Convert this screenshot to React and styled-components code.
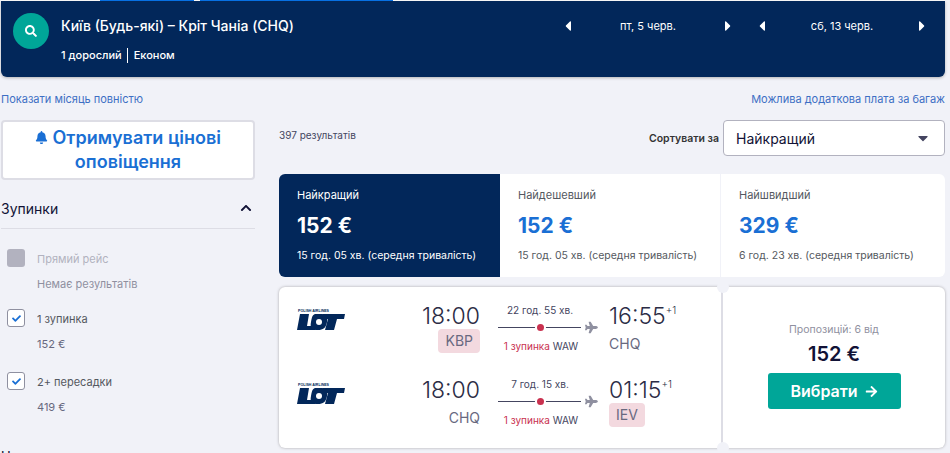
import React from "react";
import styled, { createGlobalStyle } from "styled-components";
import { FaBell, FaPlane, FaSearch, FaArrowRight, FaCheck, FaCaretLeft, FaCaretRight, FaCaretDown, FaChevronUp } from "react-icons/fa";

const GlobalStyle = createGlobalStyle`
  html, body {
    margin: 0;
    padding: 0;
    height: 453px;
    overflow: hidden;
    background: #f1f2f8;
    font-family: Inter, "Noto Sans", sans-serif;
    color: #111236;
  }
  * { box-sizing: border-box; }
`;

const Page = styled.div`
  width: 950px;
  height: 453px;
  overflow: hidden;
  padding: 0 5px 0 1px;
`;

const TopStrip = styled.div`
  display: flex;
  height: 1px;
  padding-left: 93px;
  background: #ffffff;
`;

const StripTab = styled.div`
  width: ${props => props.$width}px;
  margin-left: 6px;
  background: #0770e3;
`;

const Header = styled.header`
  display: flex;
  justify-content: space-between;
  height: 76px;
  padding: 12px 15px 0 12px;
  background: #02275a;
  color: #ffffff;
  border-radius: 0 0 6px 6px;
  box-shadow: 0 1px 3px rgba(37, 32, 31, 0.3);
`;

const HeaderLeft = styled.div`
  display: flex;
  gap: 12px;
`;

const SearchCircle = styled.div`
  display: flex;
  align-items: center;
  justify-content: center;
  width: 36px;
  height: 36px;
  border-radius: 50%;
  background: #00a698;
  font-size: 12px;
  color: #ffffff;
`;

const Route = styled.div`
  font-size: 14px;
  line-height: 20px;
  margin-top: 3px;
  font-weight: 500;
`;

const Passengers = styled.div`
  display: flex;
  align-items: center;
  margin-top: 12px;
  font-size: 11px;
  line-height: 15px;
  font-weight: 500;
`;

const PassengerPart = styled.span`
  padding-right: 5px;
  margin-right: 6px;
  border-right: ${props => (props.$divider ? "1px solid #ffffff" : "none")};
`;

const Dates = styled.div`
  display: flex;
  gap: 18px;
`;

const DatePicker = styled.div`
  display: flex;
  align-items: center;
  justify-content: space-between;
  width: 176px;
  height: 26px;
  font-size: 11px;
`;

const LinkRow = styled.div`
  display: flex;
  justify-content: space-between;
  padding-top: 16px;
  height: 43px;
  font-size: 11px;
  color: #3d6fc4;
  line-height: 13px;
`;

const Columns = styled.div`
  display: flex;
  gap: 24px;
`;

const Sidebar = styled.aside`
  width: 254px;
  flex: none;
`;

const AlertButton = styled.button`
  display: block;
  width: 254px;
  height: 60px;
  margin: 0;
  padding: 0 8px;
  background: #ffffff;
  border: 2px solid #dddde5;
  border-radius: 4px;
  color: #1a6fd4;
  font: 600 18px/24px Inter, "Noto Sans", sans-serif;
  text-align: center;
`;

const FilterHead = styled.div`
  display: flex;
  align-items: center;
  justify-content: space-between;
  margin-top: ${props => props.$top}px;
  padding: 0 3px 6px 0;
  height: 35px;
  font-size: 14px;
  border-bottom: ${props => (props.$line ? "1px solid #dddde5" : "none")};
`;

const FilterRow = styled.div`
  display: flex;
  gap: 12px;
  margin: ${props => props.$top}px 0 0 6px;
`;

const CheckBox = styled.div`
  display: flex;
  align-items: center;
  justify-content: center;
  width: 18px;
  height: 18px;
  flex: none;
  border-radius: 3px;
  background: ${props => (props.$disabled ? "#b2b2bf" : "#ffffff")};
  border: ${props => (props.$disabled ? "none" : "1px solid #8f90a0")};
  color: #1a6fd4;
  font-size: 9px;
`;

const FilterText = styled.div`
  font-size: 11px;
  line-height: 14px;
  color: ${props => (props.$disabled ? "#b2b2bf" : "#545860")};
  padding-top: 3px;
`;

const FilterSub = styled.div`
  margin-top: 11px;
  color: ${props => (props.$disabled ? "#8f90a0" : "#68697f")};
`;

const Main = styled.main`
  flex: 1;
  min-width: 0;
`;

const SortRow = styled.div`
  display: flex;
  justify-content: space-between;
  height: 36px;
`;

const ResultCount = styled.div`
  font-size: 10px;
  line-height: 14px;
  padding-top: 8px;
  color: #444560;
`;

const SortBox = styled.div`
  display: flex;
  align-items: center;
  gap: 4px;
`;

const SortLabel = styled.span`
  font-size: 10.5px;
  font-weight: 600;
  color: #333;
`;

const SortSelect = styled.div`
  display: flex;
  align-items: center;
  justify-content: space-between;
  width: 222px;
  height: 36px;
  padding: 0 13px 0 12px;
  background: #ffffff;
  border: 1px solid #b2b2bf;
  border-radius: 4px;
  font-size: 14px;
  color: #111236;
`;

const Tabs = styled.div`
  display: grid;
  grid-template-columns: 221px 221px 224px;
  height: 103px;
  margin-top: 18px;
`;

const Tab = styled.div`
  padding: 13px 18px 0;
  background: ${props => (props.$active ? "#02275a" : "#ffffff")};
  color: ${props => (props.$active ? "#ffffff" : "#545860")};
  border-radius: ${props => props.$radius};
  border-right: ${props => (props.$divider ? "1px solid #f1f2f8" : "none")};
`;

const TabTitle = styled.div`
  font-size: 11px;
  line-height: 16px;
`;

const TabPrice = styled.div`
  margin-top: 7px;
  font-size: 21px;
  line-height: 32px;
  font-weight: 700;
  color: ${props => (props.$active ? "#ffffff" : "#1a6fd4")};
`;

const TabNote = styled.div`
  margin-top: 6px;
  font-size: 10.5px;
  line-height: 16px;
  white-space: nowrap;
`;

const Ticket = styled.article`
  position: relative;
  display: grid;
  grid-template-columns: 444px 1fr;
  height: 161px;
  margin-top: 10px;
  background: #ffffff;
  border-radius: 6px;
  box-shadow: 0 0 3px rgba(37, 32, 31, 0.35);
`;

const Notch = styled.span`
  position: absolute;
  left: 438px;
  ${props => props.$side}: -6px;
  width: 12px;
  height: 12px;
  border-radius: 50%;
  background: #f1f2f8;
`;

const Legs = styled.div`
  display: flex;
  flex-direction: column;
  gap: 10px;
  padding: 16px 0 0 18px;
  border-right: 2px solid #dddde5;
`;

const Leg = styled.div`
  display: grid;
  grid-template-columns: 110px 73px 100px 1fr;
  column-gap: 0;
  height: 64px;
`;

const LogoWrap = styled.div`
  padding-top: 5px;
`;

const Departure = styled.div`
  text-align: right;
`;

const Time = styled.div`
  font-size: 23px;
  line-height: 26px;
  font-weight: 300;
  color: #2b2c45;
  white-space: nowrap;
`;

const Plus = styled.sup`
  font-size: 10px;
  line-height: 0;
  vertical-align: 10px;
`;

const Airport = styled.div`
  display: inline-block;
  margin-top: ${props => (props.$warn ? "0" : "3px")};
  padding: ${props => (props.$warn ? "2px 7px" : "2px 0")};
  height: 24px;
  font-size: 14px;
  line-height: 20px;
  color: #68697f;
  background: ${props => (props.$warn ? "#f3d9df" : "transparent")};
  border-radius: 4px;
`;

const Middle = styled.div`
  margin-left: 18px;
  width: 100px;
  text-align: center;
`;

const Duration = styled.div`
  width: 84px;
  font-size: 10px;
  line-height: 14px;
  color: #444560;
  white-space: nowrap;
`;

const LineRow = styled.div`
  display: flex;
  align-items: center;
  gap: 4px;
  height: 14px;
  margin-top: 3px;
  color: #8f90a0;
  font-size: 13px;
`;

const Line = styled.div`
  position: relative;
  width: 84px;
  height: 1px;
  background: #444560;
`;

const StopDot = styled.span`
  position: absolute;
  left: 39px;
  top: -3px;
  width: 7px;
  height: 7px;
  border-radius: 50%;
  background: #c9314f;
  box-shadow: 0 0 0 2px #ffffff;
`;

const Stops = styled.div`
  width: 86px;
  margin-top: 5px;
  font-size: 10px;
  line-height: 14px;
  color: #444560;
  white-space: nowrap;
`;

const StopCount = styled.span`
  color: #c9314f;
`;

const Arrival = styled.div`
  margin-left: 29px;
`;

const Offer = styled.div`
  display: flex;
  flex-direction: column;
  align-items: center;
  padding-top: 36px;
`;

const OfferCount = styled.div`
  font-size: 10.5px;
  line-height: 14px;
  color: #8f90a0;
`;

const OfferPrice = styled.div`
  margin-top: 3px;
  font-size: 20px;
  line-height: 28px;
  font-weight: 600;
`;

const SelectButton = styled.button`
  display: flex;
  align-items: center;
  justify-content: center;
  gap: 7px;
  width: 133px;
  height: 36px;
  margin-top: 5px;
  background: #00a698;
  border: none;
  border-radius: 3px;
  color: #ffffff;
  font: 600 16px Inter, "Noto Sans", sans-serif;
`;

const LotLogo = () => (
  <svg width="50" height="24" viewBox="0 0 50 24">
    <text x="1" y="3.5" fontFamily="Liberation Sans" fontSize="3.6" fontWeight="700" fill="#02275a">
      POLISH AIRLINES
    </text>
    <path d="M3 6h9l-2 12h9l-1 4H0z" fill="#02275a" />
    <path d="M19 6h6c5 0 6 3 5 8-1 6-4 8-9 8h-2c-5 0-6-3-5-8 1-6 2-8 5-8z" fill="#02275a" />
    <circle cx="22" cy="14" r="3" fill="#ffffff" />
    <path d="M26 6h22l-1 5h-7l-3 11h-9l3-11h-6z" fill="#02275a" />
  </svg>
);

const legs = [
  { from: "18:00", fromCode: "KBP", fromWarn: true, duration: "22 год. 55 хв.", to: "16:55", toCode: "CHQ", toWarn: false },
  { from: "18:00", fromCode: "CHQ", fromWarn: false, duration: "7 год. 15 хв.", to: "01:15", toCode: "IEV", toWarn: true },
];

const tabs = [
  { title: "Найкращий", price: "152 €", note: "15 год. 05 хв. (середня тривалість)", active: true, radius: "6px 0 0 6px" },
  { title: "Найдешевший", price: "152 €", note: "15 год. 05 хв. (середня тривалість)", divider: true, radius: "0" },
  { title: "Найшвидший", price: "329 €", note: "6 год. 23 хв. (середня тривалість)", radius: "0 6px 6px 0" },
];

export default function App() {
  return (
    <Page>
      <GlobalStyle />
      <TopStrip>
        <StripTab $width={94} />
        <StripTab $width={193} />
      </TopStrip>
      <Header>
        <HeaderLeft>
          <SearchCircle>
            <FaSearch />
          </SearchCircle>
          <div>
            <Route>Київ (Будь-які) – Кріт Чаніа (CHQ)</Route>
            <Passengers>
              <PassengerPart $divider>1 дорослий</PassengerPart>
              <PassengerPart>Економ</PassengerPart>
            </Passengers>
          </div>
        </HeaderLeft>
        <Dates>
          <DatePicker>
            <FaCaretLeft size={16} />
            пт, 5 черв.
            <FaCaretRight size={16} />
          </DatePicker>
          <DatePicker>
            <FaCaretLeft size={16} />
            сб, 13 черв.
            <FaCaretRight size={16} />
          </DatePicker>
        </Dates>
      </Header>
      <LinkRow>
        <span>Показати місяць повністю</span>
        <span>Можлива додаткова плата за багаж</span>
      </LinkRow>
      <Columns>
        <Sidebar>
          <AlertButton>
            <FaBell size={13} /> Отримувати цінові оповіщення
          </AlertButton>
          <FilterHead $top={14} $line>
            Зупинки
            <FaChevronUp size={12} />
          </FilterHead>
          <FilterRow $top={20}>
            <CheckBox $disabled />
            <FilterText $disabled>
              Прямий рейс
              <FilterSub $disabled>Немає результатів</FilterSub>
            </FilterText>
          </FilterRow>
          <FilterRow $top={18}>
            <CheckBox>
              <FaCheck />
            </CheckBox>
            <FilterText>
              1 зупинка
              <FilterSub>152 €</FilterSub>
            </FilterText>
          </FilterRow>
          <FilterRow $top={21}>
            <CheckBox>
              <FaCheck />
            </CheckBox>
            <FilterText>
              2+ пересадки
              <FilterSub>419 €</FilterSub>
            </FilterText>
          </FilterRow>
          <FilterHead $top={28}>
            Час вильоту
            <FaChevronUp size={12} />
          </FilterHead>
        </Sidebar>
        <Main>
          <SortRow>
            <ResultCount>397 результатів</ResultCount>
            <SortBox>
              <SortLabel>Сортувати за</SortLabel>
              <SortSelect>
                Найкращий
                <FaCaretDown size={16} color="#444560" />
              </SortSelect>
            </SortBox>
          </SortRow>
          <Tabs>
            {tabs.map(tab => (
              <Tab key={tab.title} $active={tab.active} $divider={tab.divider} $radius={tab.radius}>
                <TabTitle>{tab.title}</TabTitle>
                <TabPrice $active={tab.active}>{tab.price}</TabPrice>
                <TabNote>{tab.note}</TabNote>
              </Tab>
            ))}
          </Tabs>
          <Ticket>
            <Notch $side="top" />
            <Notch $side="bottom" />
            <Legs>
              {legs.map(leg => (
                <Leg key={leg.duration}>
                  <LogoWrap>
                    <LotLogo />
                  </LogoWrap>
                  <Departure>
                    <Time>{leg.from}</Time>
                    <Airport $warn={leg.fromWarn}>{leg.fromCode}</Airport>
                  </Departure>
                  <Middle>
                    <Duration>{leg.duration}</Duration>
                    <LineRow>
                      <Line>
                        <StopDot />
                      </Line>
                      <FaPlane />
                    </LineRow>
                    <Stops>
                      <StopCount>1 зупинка</StopCount> WAW
                    </Stops>
                  </Middle>
                  <Arrival>
                    <Time>
                      {leg.to}
                      <Plus>+1</Plus>
                    </Time>
                    <Airport $warn={leg.toWarn}>{leg.toCode}</Airport>
                  </Arrival>
                </Leg>
              ))}
            </Legs>
            <Offer>
              <OfferCount>Пропозицій: 6 від</OfferCount>
              <OfferPrice>152 €</OfferPrice>
              <SelectButton>
                Вибрати
                <FaArrowRight size={13} />
              </SelectButton>
            </Offer>
          </Ticket>
        </Main>
      </Columns>
    </Page>
  );
}
